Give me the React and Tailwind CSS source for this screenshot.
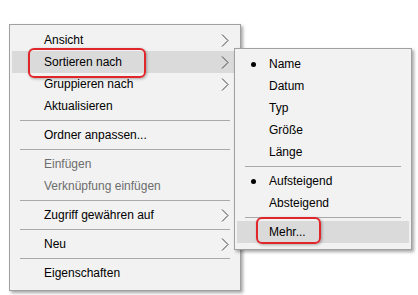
import React from 'react';

const font = { fontFamily: '"Liberation Sans", Arial, sans-serif' };

function Chevron() {
  return (
    <svg width="8" height="13" viewBox="0 0 8 13" className="shrink-0">
      <polyline points="1,0.5 7,6.5 1,12.5" fill="none" stroke="#444" strokeWidth="1" />
    </svg>
  );
}

function Sep() {
  return (
    <div className="h-[7px] flex items-center mx-[10px]">
      <div className="h-px w-full bg-[#a9a9a9]" />
    </div>
  );
}

function Item({ label, sub, disabled, active, bullet, children }) {
  return (
    <div
      className={`relative h-[22px] mx-[2px] flex items-center pl-[32px] pr-[9px] text-[12px] ${
        active ? 'bg-[#dadada]' : ''
      } ${disabled ? 'text-[#6d6d6d]' : 'text-black'}`}
    >
      {bullet && <span className="absolute left-[14px] top-[9px] w-[5px] h-[5px] rounded-full bg-black" />}
      <span className="flex-1 whitespace-nowrap">{label}</span>
      {sub && <Chevron />}
      {children}
    </div>
  );
}

function RedBox({ className }) {
  return (
    <div
      className={`absolute border-2 border-[#e0262b] rounded-[6px] shadow-[1px_1px_3px_rgba(0,0,0,0.3)] pointer-events-none ${className}`}
    />
  );
}

export default function App() {
  return (
    <div className="w-[418px] h-[295px] bg-white overflow-hidden" style={font}>
      <div className="pt-[24px] pl-[9px]">
        {/* Main context menu */}
        <div className="relative w-[232px] bg-[#f2f2f2] border border-[#a0a0a0] pt-[4px] pb-[6px] shadow-[2px_2px_3px_rgba(0,0,0,0.35)]">
          <Item label="Ansicht" sub />
          <Item label="Sortieren nach" sub active>
            <RedBox className="left-[16px] top-[-3px] w-[118px] h-[30px]" />
          </Item>
          <Item label="Gruppieren nach" sub />
          <Item label="Aktualisieren" />
          <Sep />
          <Item label="Ordner anpassen..." />
          <Sep />
          <Item label="Einfügen" disabled />
          <Item label="Verknüpfung einfügen" disabled />
          <Sep />
          <Item label="Zugriff gewähren auf" sub />
          <Sep />
          <Item label="Neu" sub />
          <Sep />
          <Item label="Eigenschaften" />

          {/* Submenu: Sortieren nach */}
          <div className="absolute left-[224px] top-[23px] w-[178px] bg-[#f2f2f2] border border-[#a0a0a0] pt-[4px] pb-[6px] shadow-[2px_2px_3px_rgba(0,0,0,0.35)]">
            <Item label="Name" bullet />
            <Item label="Datum" />
            <Item label="Typ" />
            <Item label="Größe" />
            <Item label="Länge" />
            <Sep />
            <Item label="Aufsteigend" bullet />
            <Item label="Absteigend" />
            <Sep />
            <Item label="Mehr..." active>
              <RedBox className="left-[19px] top-[-4px] w-[65px] h-[27px]" />
            </Item>
          </div>
        </div>
      </div>
    </div>
  );
}
